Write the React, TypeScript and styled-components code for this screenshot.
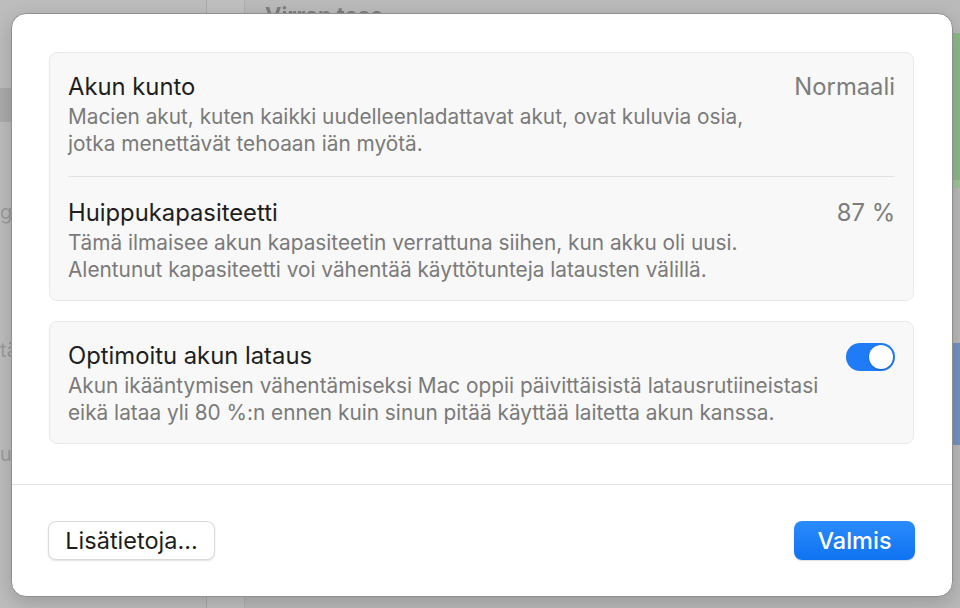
import React from "react";
import styled, { createGlobalStyle } from "styled-components";

const Global = createGlobalStyle`
  html, body { margin: 0; padding: 0; }
  body {
    width: 960px; height: 608px; overflow: hidden;
    font-family: Inter, "Noto Sans", "Liberation Sans", sans-serif;
    -webkit-font-smoothing: antialiased;
  }
`;

const Stage = styled.div`
  position: relative;
  width: 960px;
  height: 608px;
  overflow: hidden;
  background: #a9a9a9;
`;

/* window behind the sheet (dimmed) */
const Backdrop = styled.div`
  display: grid;
  grid-template-columns: 207px 38px 1fr;
  width: 100%;
  height: 100%;
  filter: blur(0.6px);
`;

const Sidebar = styled.div`
  background: #bdbdbd;
  border-right: 1px solid #a9a9a9;
  display: flex;
  flex-direction: column;
  padding-top: 88px;
`;

const SideSelected = styled.div`
  height: 34px;
  background: #ababab;
`;

const SideLetter = styled.div<{ $top: number }>`
  margin-top: ${(p) => p.$top}px;
  font-size: 20px;
  color: #9a9a9a;
  height: 24px;
  line-height: 24px;
`;

const Gutter = styled.div`
  background: #c0c0c0;
  border-right: 1px solid #b0b0b0;
`;

const BackContent = styled.div`
  background: #bababa;
  display: flex;
  flex-direction: column;
  padding-left: 20px;
`;

const BackTitle = styled.div`
  font-size: 22px;
  font-weight: 700;
  color: #7e7e7e;
  line-height: 26px;
  margin-top: 2px;
`;

const BackRight = styled.div`
  align-self: flex-end;
  width: 12px;
  display: flex;
  flex-direction: column;
`;

const Chip = styled.div<{ $h: number; $c: string; $mt?: number }>`
  height: ${(p) => p.$h}px;
  background: ${(p) => p.$c};
  margin-top: ${(p) => p.$mt ?? 0}px;
`;

const Sheet = styled.div`
  position: absolute;
  left: 11px;
  top: 13px;
  width: 940px;
  height: 582px;
  background: #ffffff;
  border: 1px solid #8f8f8f;
  border-radius: 15px;
  box-shadow: 0 6px 20px rgba(0, 0, 0, 0.18);
  display: flex;
  flex-direction: column;
  box-sizing: content-box;
`;

const Body = styled.div`
  display: flex;
  flex-direction: column;
  gap: 20px;
  padding: 38px 38px 40px 37px;
`;

const Group = styled.div`
  background: #f8f8f8;
  border: 1px solid #e9e9e9;
  border-radius: 8px;
  padding: 0 18px;
  display: flex;
  flex-direction: column;
`;

const Row = styled.div<{ $divider?: boolean }>`
  display: flex;
  align-items: flex-start;
  justify-content: space-between;
  padding: ${(p) => (p.$divider ? "22px" : "20px")} 0 19px;
  border-top: ${(p) => (p.$divider ? "1px solid #e3e3e3" : "none")};
  &:last-child {
    padding-bottom: 17px;
  }
`;

const Texts = styled.div`
  display: flex;
  flex-direction: column;
`;

const Title = styled.div`
  font-size: 23.8px;
  line-height: 28px;
  color: #1e1e1e;
`;

const Desc = styled.div`
  font-size: 20.8px;
  line-height: 27px;
  color: #7a7a7a;
  margin-top: 2px;
`;

const Value = styled.div`
  font-size: 23.8px;
  line-height: 28px;
  color: #7d7d7d;
`;

const Toggle = styled.div<{ $on: boolean }>`
  width: 49px;
  height: 28px;
  border-radius: 14px;
  background: ${(p) => (p.$on ? "#1f7cf6" : "#d9d9d9")};
  display: flex;
  align-items: center;
  justify-content: ${(p) => (p.$on ? "flex-end" : "flex-start")};
  padding: 0 2px;
  box-sizing: border-box;
  margin-top: 1px;
  flex-shrink: 0;
`;

const Knob = styled.div`
  width: 24px;
  height: 24px;
  border-radius: 50%;
  background: #fff;
  box-shadow: 0 1px 2px rgba(0, 0, 0, 0.25);
`;

const Footer = styled.div`
  border-top: 1px solid #e0e0e0;
  display: flex;
  justify-content: space-between;
  align-items: center;
  padding: 36px 37px 0 36px;
`;

const Button = styled.button<{ $primary?: boolean }>`
  height: 39px;
  border-radius: 8px;
  font-family: inherit;
  font-size: 23.5px;
  padding: 0 ${(p) => (p.$primary ? "20px" : "12px")};
  min-width: ${(p) => (p.$primary ? "121px" : "167px")};
  color: ${(p) => (p.$primary ? "#ffffff" : "#1d1d1d")};
  font-weight: ${(p) => (p.$primary ? 500 : 400)};
  background: ${(p) =>
    p.$primary ? "linear-gradient(#2a8bfb, #0f73f2)" : "#ffffff"};
  border: ${(p) => (p.$primary ? "none" : "1px solid #dadada")};
  box-shadow: ${(p) =>
    p.$primary ? "0 1px 1px rgba(0,0,0,0.12)" : "0 1px 2px rgba(0,0,0,0.12)"};
`;

export default function App() {
  return (
    <>
      <Global />
      <Stage>
        <Backdrop>
          <Sidebar>
            <SideSelected />
            <SideLetter $top={78}>g</SideLetter>
            <SideLetter $top={114}>tä</SideLetter>
            <SideLetter $top={80}>u</SideLetter>
          </Sidebar>
          <Gutter />
          <BackContent>
            <BackTitle>Virran taso</BackTitle>
            <BackRight>
              <Chip $h={147} $c="#8dbb87" $mt={5} />
              <Chip $h={8} $c="#9ec79a" />
              <Chip $h={155} $c="#bababa" />
              <Chip $h={102} $c="#7593c4" />
            </BackRight>
          </BackContent>
        </Backdrop>
        <Sheet>
          <Body>
            <Group>
              <Row>
                <Texts>
                  <Title>Akun kunto</Title>
                  <Desc>
                    Macien akut, kuten kaikki uudelleenladattavat akut, ovat kuluvia osia,
                    <br />
                    jotka menettävät tehoaan iän myötä.
                  </Desc>
                </Texts>
                <Value>Normaali</Value>
              </Row>
              <Row $divider>
                <Texts>
                  <Title>Huippukapasiteetti</Title>
                  <Desc>
                    Tämä ilmaisee akun kapasiteetin verrattuna siihen, kun akku oli uusi.
                    <br />
                    Alentunut kapasiteetti voi vähentää käyttötunteja latausten välillä.
                  </Desc>
                </Texts>
                <Value>87 %</Value>
              </Row>
            </Group>
            <Group>
              <Row>
                <Texts>
                  <Title>Optimoitu akun lataus</Title>
                  <Desc>
                    Akun ikääntymisen vähentämiseksi Mac oppii päivittäisistä latausrutiineistasi
                    <br />
                    eikä lataa yli 80 %:n ennen kuin sinun pitää käyttää laitetta akun kanssa.
                  </Desc>
                </Texts>
                <Toggle $on>
                  <Knob />
                </Toggle>
              </Row>
            </Group>
          </Body>
          <Footer>
            <Button>Lisätietoja...</Button>
            <Button $primary>Valmis</Button>
          </Footer>
        </Sheet>
      </Stage>
    </>
  );
}
